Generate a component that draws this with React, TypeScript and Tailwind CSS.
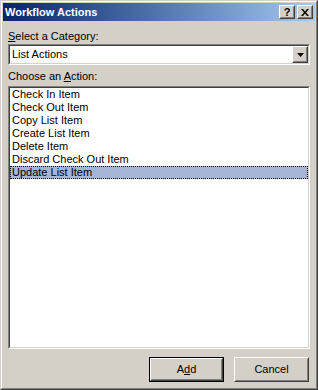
const actions = [
  "Check In Item",
  "Check Out Item",
  "Copy List Item",
  "Create List Item",
  "Delete Item",
  "Discard Check Out Item",
  "Update List Item",
]

function Raised({ className = "", children }: { className?: string; children?: React.ReactNode }) {
  return (
    <div className={`border border-t-white border-l-white border-r-[#404040] border-b-[#404040] bg-[#D4D0C8] ${className}`}>
      <div className="w-full h-full border border-t-[#D4D0C8] border-l-[#D4D0C8] border-r-[#808080] border-b-[#808080] flex items-center justify-center">
        {children}
      </div>
    </div>
  )
}

function Sunken({ className = "", children }: { className?: string; children?: React.ReactNode }) {
  return (
    <div className={`border border-t-[#808080] border-l-[#808080] border-r-white border-b-white ${className}`}>
      <div className="w-full h-full border border-t-[#404040] border-l-[#404040] border-r-[#D4D0C8] border-b-[#D4D0C8] bg-white">
        {children}
      </div>
    </div>
  )
}

export default function App() {
  return (
    <div className="w-[318px] h-[390px] border border-t-[#D4D0C8] border-l-[#D4D0C8] border-r-[#404040] border-b-[#404040] bg-[#D4D0C8] font-['Liberation_Sans',Arial,sans-serif] text-[11px] leading-[13px] text-black select-none">
      <div className="h-full border border-t-white border-l-white border-r-[#808080] border-b-[#808080] p-px flex flex-col">
        {/* title bar */}
        <div className="h-[18px] flex items-center pl-[2px] pr-[2px] bg-gradient-to-r from-[#0A246A] to-[#A6CAF0]">
          <span className="flex-1 text-white font-bold">Workflow Actions</span>
          <Raised className="w-[16px] h-[14px]">
            <span className="font-bold text-[11px] leading-none">?</span>
          </Raised>
          <Raised className="w-[16px] h-[14px] ml-[2px]">
            <svg width="8" height="7" viewBox="0 0 8 7">
              <path d="M0 0h2l2 2.5L6 0h2L5 3.5 8 7H6L4 4.5 2 7H0l3-3.5z" fill="black" />
            </svg>
          </Raised>
        </div>

        <div className="flex flex-col px-[5px]">
          <div className="mt-[9px] h-[13px]">
            <span className="underline">S</span>elect a Category:
          </div>
          <Sunken className="mt-[1px] h-[21px]">
            <div className="h-full flex items-center">
              <span className="flex-1 pl-[2px]">List Actions</span>
              <Raised className="w-[16px] h-full">
                <svg width="7" height="4" viewBox="0 0 7 4">
                  <path d="M0 0h7L3.5 4z" fill="black" />
                </svg>
              </Raised>
            </div>
          </Sunken>

          <div className="mt-[5px] h-[13px]">
            Choose an <span className="underline">A</span>ction:
          </div>
          <Sunken className="mt-[3px] h-[263px]">
            <div className="flex flex-col">
              {actions.map((a, i) => (
                <div
                  key={a}
                  className={
                    i === actions.length - 1
                      ? "h-[13px] pl-[1px] bg-[#A6B4D5] border border-dotted border-black leading-[11px]"
                      : "h-[13px] pl-[2px]"
                  }
                >
                  {a}
                </div>
              ))}
            </div>
          </Sunken>

          <div className="mt-[8px] flex justify-end gap-[10px] mr-[1px]">
            <div className="w-[75px] h-[25px] border border-black">
              <Raised className="w-full h-full">
                <span>
                  A<span className="underline">d</span>d
                </span>
              </Raised>
            </div>
            <Raised className="w-[75px] h-[25px]">
              <span>Cancel</span>
            </Raised>
          </div>
        </div>
      </div>
    </div>
  )
}
